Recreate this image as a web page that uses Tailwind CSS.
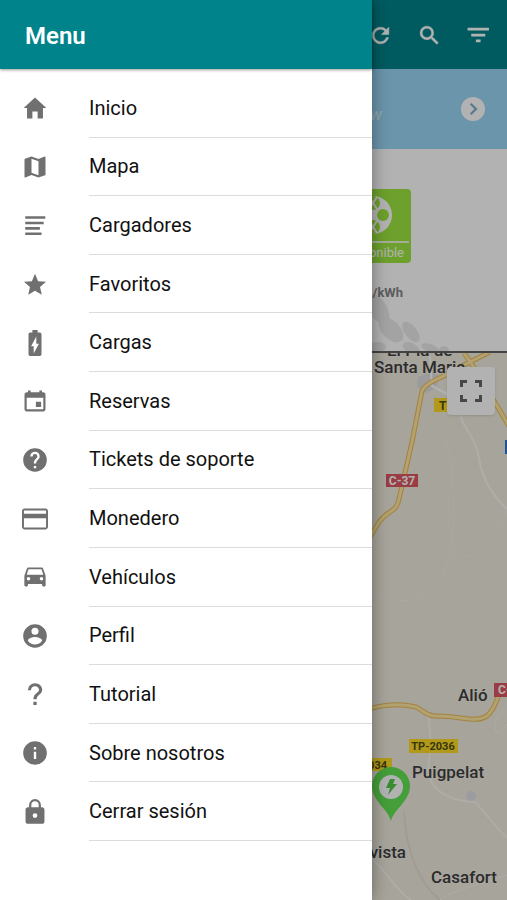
<!DOCTYPE html>
<html lang="es">
<head>
    <meta charset="UTF-8">
    <meta name="viewport" content="width=device-width, initial-scale=1.0">
    <title>Menu</title>
    <script src="https://cdn.jsdelivr.net/npm/@tailwindcss/browser@4"></script>
</head>
<body class="relative min-h-screen overflow-x-hidden bg-white font-['Roboto',sans-serif]">
    <!-- Main screen -->
    <main class="flex min-h-screen flex-col">
        <header class="flex h-[69px] items-center justify-end gap-6 bg-[#00838a] pt-[2px] pr-4 text-white">
            <button aria-label="Actualizar"><svg class="size-[25px]" viewBox="0 0 24 24" fill="currentColor" stroke="currentColor" stroke-width=".5"><path d="M17.65 6.35A7.96 7.96 0 0 0 12 4a8 8 0 1 0 7.73 10h-2.08A6 6 0 1 1 12 6c1.66 0 3.14.69 4.22 1.78L13 11h7V4l-2.35 2.35z"/></svg></button>
            <button aria-label="Buscar"><svg class="size-[25px]" viewBox="0 0 24 24" fill="currentColor" stroke="currentColor" stroke-width=".5"><path d="M15.5 14h-.79l-.28-.27A6.47 6.47 0 0 0 16 9.5 6.5 6.5 0 1 0 9.5 16c1.61 0 3.09-.59 4.23-1.57l.27.28v.79l5 4.99L20.49 19l-4.99-5zm-6 0a4.5 4.5 0 1 1 0-9 4.5 4.5 0 0 1 0 9z"/></svg></button>
            <button aria-label="Filtrar"><svg class="size-[25px]" viewBox="0 0 24 24" fill="currentColor"><path d="M1.500 4.500h20.500v2.700h-20.500zM5 10.200h13.500v2.700H5zM9.500 15.900h4.500v2.500H9.500z"/></svg></button>
        </header>

        <section class="flex h-20 items-center justify-end gap-[77px] bg-[#9ad6f5] pr-[20px] text-white">
            <p class="pt-3 text-base text-white/60 italic">Ver más info now</p>
            <button aria-label="Siguiente"><svg class="size-[28px]" viewBox="0 0 24 24"><circle cx="12" cy="12" r="10.3" fill="#fff"/><path d="M10 7.5l4.5 4.5-4.5 4.5" fill="none" stroke="#7fb0ca" stroke-width="2"/></svg></button>
        </section>

        <section class="relative flex h-[204px] flex-col items-end border-b-2 border-[#606060] bg-white pt-10 pr-24">
            <svg class="absolute right-0 bottom-0 h-[60px] w-[160px]" viewBox="347 291 160 60" fill="#eaeaea">
                <ellipse cx="378" cy="309" rx="9" ry="17" transform="rotate(-30 378 309)"/>
                <ellipse cx="391" cy="330" rx="15" ry="9" transform="rotate(45 391 330)"/>
                <ellipse cx="411" cy="332" rx="12" ry="6" transform="rotate(52 411 332)"/>
                <ellipse cx="411" cy="348" rx="9" ry="5" transform="rotate(25 411 348)"/>
                <ellipse cx="430" cy="348" rx="9" ry="4" transform="rotate(20 430 348)"/>
                <ellipse cx="444" cy="350" rx="5" ry="4"/>
                <ellipse cx="377" cy="347" rx="9" ry="5"/>
            </svg>
            <div class="flex h-[74px] w-[76px] flex-col items-center rounded-sm bg-[#9ce63f] text-white">
                <svg class="mt-1 size-[44px]" viewBox="0 0 44 44">
                    <circle cx="22" cy="22" r="19" fill="#fff"/>
                    <g fill="#9ce63f">
                        <circle cx="32" cy="22" r="6"/><circle cx="12" cy="22" r="6"/>
                        <circle cx="22" cy="10" r="7"/><circle cx="22" cy="34" r="7"/>
                    </g>
                    <path d="M18 4l8 12M26 4l-8 12M18 28l8 12M26 28l-8 12" stroke="#fff" stroke-width="2"/>
                </svg>
                <span class="mt-1 mr-[2px] h-[2px] w-[72px] self-end bg-white/80"></span>
                <span class="self-end pr-[7px] text-[13px] leading-5">Disponible</span>
            </div>
            <p class="relative pt-5 pr-[8px] text-[13px] font-bold text-[#858585]">0,35 €/kWh</p>
        </section>

        <section class="relative grow overflow-hidden bg-[#f0ebde]">
            <svg class="absolute top-0 right-0 h-[547px] w-[160px] font-['Roboto',sans-serif]" viewBox="347 353 160 547" fill="none">
                <path d="M418 377l13-5 9 4-4 12-10 5-9-6z" fill="#dfdfe3"/>
                <g stroke-width="2">
                    <path d="M461 415c0 12 15 20 18 44 3 20 16 40 28 50" stroke="#faf8f4"/>
                    <path d="M430 356l2 30 30 16" stroke="#fff"/>
                    <path d="M439 428c16 24 13 60 15 90-1 18-3 30-5 38M507 510c-15 50-35 45-58 48-6 28-28 40-39 42-20 3-25-6-34-8" stroke="#f5f0e6" stroke-width="1"/>
                    <path d="M428 711c4 34 2 46 0 58 0 18 18 32 46 33 9 6 16 20 33 36M373 860c14 12 26 34 38 40" stroke="#f8f6f0"/>
                    <path d="M404 812c2 34 12 68 36 88" stroke="#e5e0d2"/>
                    <path d="M440 900c12-10 36-14 67-25M498 716c-8 20 2 20 9 8" stroke="#f8f6f0" stroke-width="1"/>
                </g>
                <circle cx="471" cy="796" r="5" fill="#dfdfe9"/>
                <g stroke-linejoin="round">
                    <path d="M367 542l12-20c10-14 17-8 20-23l13-57c4-20 7-36 10-51 4-10 24-14 36-23l32-16M464 353c12 16 20 30 30 48l18 30M340 720c30-13 50-19 76-13 7 3 9 8 18 9 26-1 40 8 53 0 9-8 9-16 14-26" stroke="#ecba55" stroke-width="5"/>
                    <path d="M367 542l12-20c10-14 17-8 20-23l13-57c4-20 7-36 10-51 4-10 24-14 36-23l32-16M464 353c12 16 20 30 30 48l18 30M340 720c30-13 50-19 76-13 7 3 9 8 18 9 26-1 40 8 53 0 9-8 9-16 14-26" stroke="#ffe9a4" stroke-width="3"/>
                </g>
                <g fill="#404040" stroke="#f5f2eb" stroke-width="1" paint-order="stroke" font-size="17" font-weight="500">
                    <text x="387" y="356">El Pla de</text>
                    <text x="374" y="373">Santa Maria</text>
                    <text x="458" y="701">Alió</text>
                    <text x="412" y="778">Puigpelat</text>
                    <text x="406" y="858" text-anchor="end">Bellavista</text>
                    <text x="431" y="883">Casafort</text>
                </g>
                <g font-size="12" font-weight="700">
                    <rect x="434" y="398" width="30" height="14" fill="#ffdb27"/>
                    <text x="439" y="410" fill="#505010">TP</text>
                    <rect x="386" y="474" width="32" height="13" fill="#dc5760"/>
                    <text x="402" y="485" fill="#fff" text-anchor="middle">C-37</text>
                    <rect x="494" y="683" width="32" height="14" fill="#dc5760"/>
                    <text x="498" y="694" fill="#fff">C-37</text>
                    <rect x="505" y="440" width="12" height="14" fill="#2a79dc"/>
                    <rect x="409" y="739" width="49" height="14" fill="#ffdb27"/>
                    <text x="433" y="750" fill="#505010" text-anchor="middle" font-size="11">TP-2036</text>
                    <rect x="347" y="758" width="45" height="13" fill="#ffdb27"/>
                    <text x="387" y="769" fill="#505010" text-anchor="end" font-size="11">TP-2034</text>
                </g>
                <path d="M391 821c-3-12-19-20-19-35a19 19 0 0 1 38 0c0 15-16 23-19 35z" fill="#62e352"/>
                <circle cx="391" cy="787" r="12" fill="#fff"/>
                <path d="M390 779h5l-2 5h4l-9 11 2-7h-4z" fill="#55c94a"/>
            </svg>
            <button aria-label="Pantalla completa" class="absolute top-[14px] right-3 flex size-[48px] items-center justify-center rounded-sm bg-white text-[#666] shadow">
                <svg class="size-[24px]" viewBox="0 0 24 24" fill="none" stroke="currentColor" stroke-width="3"><path d="M2.500 8V2.500H8M16 2.500h5.500V8M21.500 16v5.500H16M8 21.500H2.500V16"/></svg>
            </button>
        </section>
    </main>

    <div class="absolute inset-0 bg-black/30"></div>

    <!-- Side menu -->
    <aside class="absolute inset-y-0 left-0 w-[372px] max-w-full bg-white shadow-[0_0_16px_rgba(0,0,0,0.4)]">
        <div class="flex h-[69px] items-center bg-[#00838a] px-[25px] pt-[2px] shadow-[0_1px_3px_rgba(0,0,0,0.4)]">
            <h1 class="text-[24px] font-semibold text-white">Menu</h1>
        </div>
        <nav class="pt-[10px]">
            <ul id="menu" class="grid min-h-[762px] auto-rows-fr"></ul>
        </nav>
    </aside>

    <script>
        const items = [
            { label: "Inicio", box: "18 18 476 476", icon: "M208 448V320h96v128h97.600V256H464L256 64 48 256h62.400v192z" },
            { label: "Mapa", box: "18 18 476 476", icon: "M438.600 64h-5.300L320 109 192 64 72 104c-4 1.300-8 5.300-8 10.700v322.600c0 6.700 5.300 10.700 10.700 10.700H80l112-45 128 45 120-40c4-1.300 8-5.300 8-10.700V74.700c0-6.700-4-10.700-9.400-10.700zM320 405.300l-128-45V106.700l128 45v253.600z" },
            { label: "Cargadores", box: "0 0 24 24", icon: "M3 3h18.500v2.400H3zM3 8h17v2.400H3zM3 13h13.500v2.400H3zM3 18h15v2.400H3z" },
            { label: "Favoritos", box: "18 12 476 476", icon: "M256 372.700L380.800 448l-33-142L458 210.400l-145.300-12.500L256 64l-56.700 133.900L54 210.400l110.200 95.500L131.200 448z" },
            { label: "Cargas", box: "2 2 20 20", icon: "M15.670 4H14V2h-4v2H8.330C7.600 4 7 4.600 7 5.330v15.330C7 21.400 7.600 22 8.330 22h7.330c.740 0 1.340-.600 1.340-1.330V5.330C17 4.600 16.400 4 15.670 4zM11 20v-5.500H9L13 7v5.500h2L11 20z" },
            { label: "Reservas", box: "18 18 476 476", icon: "M368 272h-96v96h96v-96zM336 64v32H176V64h-48v32h-24c-22 0-40 18-40 40v272c0 22 18 40 40 40h304c22 0 40-18 40-40V136c0-22-18-40-40-40h-24V64h-48zm72 344H104V196h304v212z" },
            { label: "Tickets de soporte", box: "1 1 22 22", icon: "M12 2a10 10 0 1 0 0 20 10 10 0 0 0 0-20zm1 17h-2v-2h2v2zm2.070-7.750l-.900.920C13.450 12.900 13 13.500 13 15h-2v-.500c0-1.100.450-2.100 1.170-2.830l1.240-1.260c.370-.360.590-.860.590-1.410a2 2 0 0 0-4 0H8a4 4 0 0 1 8 0c0 .880-.360 1.680-.930 2.250z" },
            { label: "Monedero", box: "2 2 20 20", icon: "M20 4H4c-1.110 0-1.990.890-1.990 2L2 18c0 1.110.890 2 2 2h16c1.110 0 2-.890 2-2V6c0-1.110-.890-2-2-2zm.500 14.500h-17v-7h17v7zm0-10.500h-17V5.500h17V8z" },
            { label: "Vehículos", box: "1 2 22 22", icon: "M18.920 6.010C18.720 5.420 18.160 5 17.500 5h-11c-.660 0-1.210.420-1.420 1.010L3 12v8c0 .550.450 1 1 1h1c.550 0 1-.450 1-1v-1h12v1c0 .550.450 1 1 1h1c.550 0 1-.450 1-1v-8l-2.080-5.990zM6.500 16a1.500 1.500 0 1 1 0-3 1.500 1.500 0 0 1 0 3zm11 0a1.500 1.500 0 1 1 0-3 1.500 1.500 0 0 1 0 3zM5 11l1.500-4.500h11L19 11H5z" },
            { label: "Perfil", box: "1 1 22 22", icon: "M12 2a10 10 0 1 0 0 20 10 10 0 0 0 0-20zm0 3a3 3 0 1 1 0 6 3 3 0 0 1 0-6zm0 14.200a7.200 7.200 0 0 1-6-3.220c.030-1.990 4-3.080 6-3.080 1.990 0 5.970 1.090 6 3.080a7.200 7.200 0 0 1-6 3.220z" },
            { label: "Tutorial", box: "1 1 22 22", icon: "M10.600 18.500h2.800V21.300h-2.800zM5.900 8.800A6 6 0 0 1 12 3c3.400 0 6.100 2.400 6.100 5.500 0 4-4.700 4.300-4.700 8h-2.700c0-5.300 4.700-5.100 4.700-8 0-1.700-1.500-3-3.400-3s-3.400 1.300-3.400 3.300z" },
            { label: "Sobre nosotros", box: "1 1 22 22", icon: "M12 2a10 10 0 1 0 0 20 10 10 0 0 0 0-20zm1 15h-2v-6h2v6zm0-8h-2V7h2v2z" },
            { label: "Cerrar sesión", box: "1 1 22 22", icon: "M18 8h-1V6A5 5 0 0 0 7 6v2H6c-1.100 0-2 .900-2 2v10c0 1.100.900 2 2 2h12c1.100 0 2-.900 2-2V10c0-1.100-.900-2-2-2zm-6 9a2 2 0 1 1 0-4 2 2 0 0 1 0 4zm3.100-9H8.900V6a3.100 3.100 0 0 1 6.200 0v2z" }
        ];

        const menuEl = document.getElementById('menu');
        items.forEach(item => {
            const li = document.createElement('li');
            li.className = 'flex';
            li.innerHTML = `
                <a href="#" class="flex w-full items-stretch pl-[22px] text-[20px] text-[#111]">
                    <span class="flex w-[67px] shrink-0 items-center">
                        <svg class="size-[26px] text-[#707070]" viewBox="${item.box}" fill="currentColor" fill-rule="evenodd"><path d="${item.icon}"/></svg>
                    </span>
                    <span class="flex grow items-center border-b border-[#dcdcdc]">${item.label}</span>
                </a>`;
            menuEl.appendChild(li);
        });
    </script>
</body>
</html>
